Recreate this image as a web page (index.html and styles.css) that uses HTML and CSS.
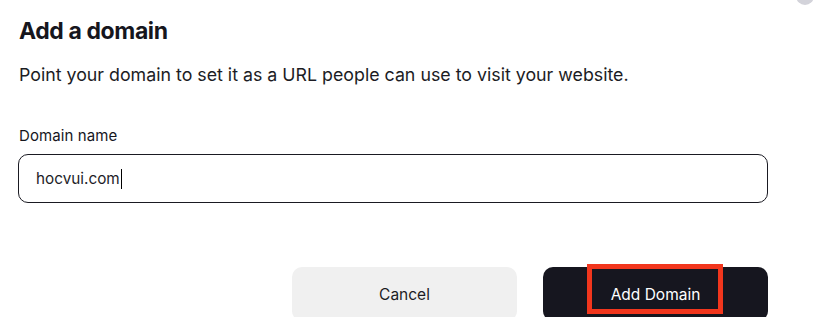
FILE: index.html
```html
<!DOCTYPE html>
<html lang="en">
<head>
<meta charset="utf-8">
<title>Add a domain</title>
<link rel="stylesheet" href="styles.css">
</head>
<body>
<div class="close-dot"></div>
<div class="dialog">
  <h1 class="title">Add a domain</h1>
  <p class="subtitle">Point your domain to set it as a URL people can use to visit your website.</p>
  <label class="label">Domain name</label>
  <div class="field"><span class="value">hocvui.com</span><span class="caret"></span></div>
  <div class="actions">
    <button class="btn btn-cancel">Cancel</button>
    <button class="btn btn-primary">Add Domain<span class="highlight"></span></button>
  </div>
</div>
</body>
</html>
```
FILE: styles.css
```css
html, body {
  margin: 0;
  padding: 0;
  background: #ffffff;
  overflow: hidden;
}
body {
  width: 822px;
  height: 317px;
  position: relative;
  font-family: Inter, "Noto Sans", sans-serif;
  color: #16161d;
}
.close-dot {
  position: absolute;
  left: 796px;
  top: -13px;
  width: 18px;
  height: 18px;
  border-radius: 50%;
  background: #d3d3da;
}
.dialog {
  padding: 0 54px 0 18px;
  display: flex;
  flex-direction: column;
}
.title {
  margin: 17px 0 0 1px;
  font-size: 23px;
  font-weight: 700;
  line-height: 28px;
  letter-spacing: -0.4px;
}
.subtitle {
  margin: 18px 0 0 1px;
  font-size: 17.8px;
  line-height: 24px;
  font-weight: 400;
  color: #1c1c24;
}
.label {
  margin: 39px 0 0 1px;
  font-size: 15px;
  line-height: 20px;
  font-weight: 400;
  letter-spacing: 0.1px;
}
.field {
  margin-top: 8px;
  height: 47px;
  border: 1px solid #1a1a22;
  border-radius: 10px;
  display: flex;
  align-items: center;
  padding-left: 17px;
  font-size: 15.3px;
}
.value {
  color: #1d1d28;
}
.caret {
  display: inline-block;
  width: 1px;
  height: 20px;
  background: #000;
  margin-left: 1px;
}
.actions {
  margin-top: 64px;
  display: flex;
  justify-content: flex-end;
  gap: 26px;
}
.btn {
  width: 225px;
  height: 54px;
  border: none;
  border-radius: 10px;
  font-family: inherit;
  font-size: 15.5px;
  font-weight: 400;
  padding: 0;
  position: relative;
}
.btn-cancel {
  background: #f0f0f0;
  color: #1c1c24;
}
.btn-primary {
  background: #16161f;
  color: #ffffff;
}
.highlight {
  position: absolute;
  left: 44px;
  top: -3px;
  width: 126px;
  height: 40px;
  border: 5px solid #f2361d;
}
```
